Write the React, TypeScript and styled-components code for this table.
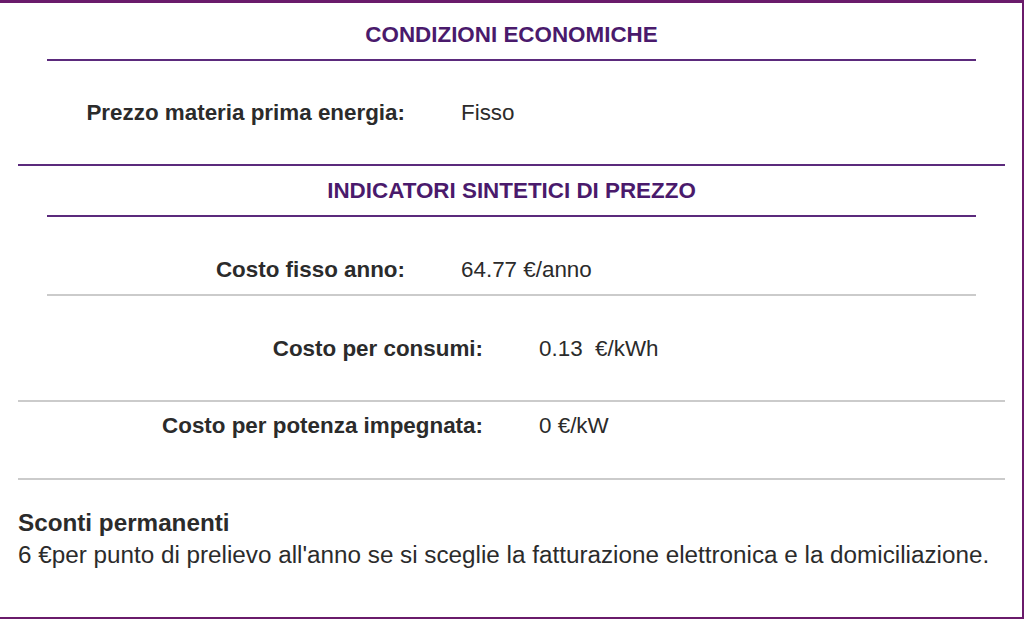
import styled, { createGlobalStyle } from "styled-components";

const GlobalStyle = createGlobalStyle`
  html, body {
    margin: 0;
    padding: 0;
    background: #fff;
  }
  body {
    font-family: "Liberation Sans", Arial, sans-serif;
    color: #2b2b2b;
  }
`;

const Frame = styled.div`
  box-sizing: border-box;
  width: 1024px;
  height: 619px;
  background: #fff;
  border-top: 3px solid #6a1b6b;
  border-right: 2px solid #6a1b6b;
  border-bottom: 2px solid #6a1b6b;
  padding: 0 17px 0 18px;
  overflow: hidden;
`;

const Section = styled.div`
  border-bottom: 2px solid #5b2a7c;
`;

const Inner = styled.div`
  margin: 0 29px;
`;

const Title = styled.h2<{ $pt: number; $pb: number }>`
  margin: 0;
  padding: ${(p) => p.$pt}px 0 ${(p) => p.$pb}px;
  border-bottom: 2px solid #5b2a7c;
  text-align: center;
  font-size: 22.4px;
  line-height: 26px;
  font-weight: 700;
  color: #4a1a6c;
`;

const Row = styled.div<{ $label: number; $pt: number; $pb: number; $line?: boolean }>`
  display: grid;
  grid-template-columns: ${(p) => p.$label}px 1fr;
  column-gap: 56px;
  padding: ${(p) => p.$pt}px 0 ${(p) => p.$pb}px;
  border-bottom: ${(p) => (p.$line ? "2px solid #cbcbcb" : "none")};
  font-size: 22.4px;
  line-height: 26px;
`;

const Label = styled.span`
  text-align: right;
  font-weight: 700;
  color: #2b2b2b;
`;

const Value = styled.span`
  white-space: pre;
  color: #2b2b2b;
`;

const Note = styled.div`
  margin-top: 27px;
  font-size: 24.25px;
  line-height: 32px;
`;

const NoteTitle = styled.div`
  font-weight: 700;
`;

const NoteText = styled.div`
  white-space: pre;
`;

export default function App() {
  return (
    <>
      <GlobalStyle />
      <Frame>
        <Section>
          <Inner>
            <Title $pt={19} $pb={11}>CONDIZIONI ECONOMICHE</Title>
            <Row $label={358} $pt={39} $pb={38}>
              <Label>Prezzo materia prima energia:</Label>
              <Value>Fisso</Value>
            </Row>
          </Inner>
        </Section>
        <Inner>
          <Title $pt={12} $pb={11}>INDICATORI SINTETICI DI PREZZO</Title>
          <Row $label={358} $pt={40} $pb={11} $line>
            <Label>Costo fisso anno:</Label>
            <Value>64.77 €/anno</Value>
          </Row>
        </Inner>
        <Row $label={465} $pt={40} $pb={38} $line>
          <Label>Costo per consumi:</Label>
          <Value>0.13  €/kWh</Value>
        </Row>
        <Row $label={465} $pt={11} $pb={39} $line>
          <Label>Costo per potenza impegnata:</Label>
          <Value>0 €/kW</Value>
        </Row>
        <Note>
          <NoteTitle>Sconti permanenti</NoteTitle>
          <NoteText>
            6 €per punto di prelievo all'anno se si sceglie la fatturazione elettronica e la domiciliazione.
          </NoteText>
        </Note>
      </Frame>
    </>
  );
}
